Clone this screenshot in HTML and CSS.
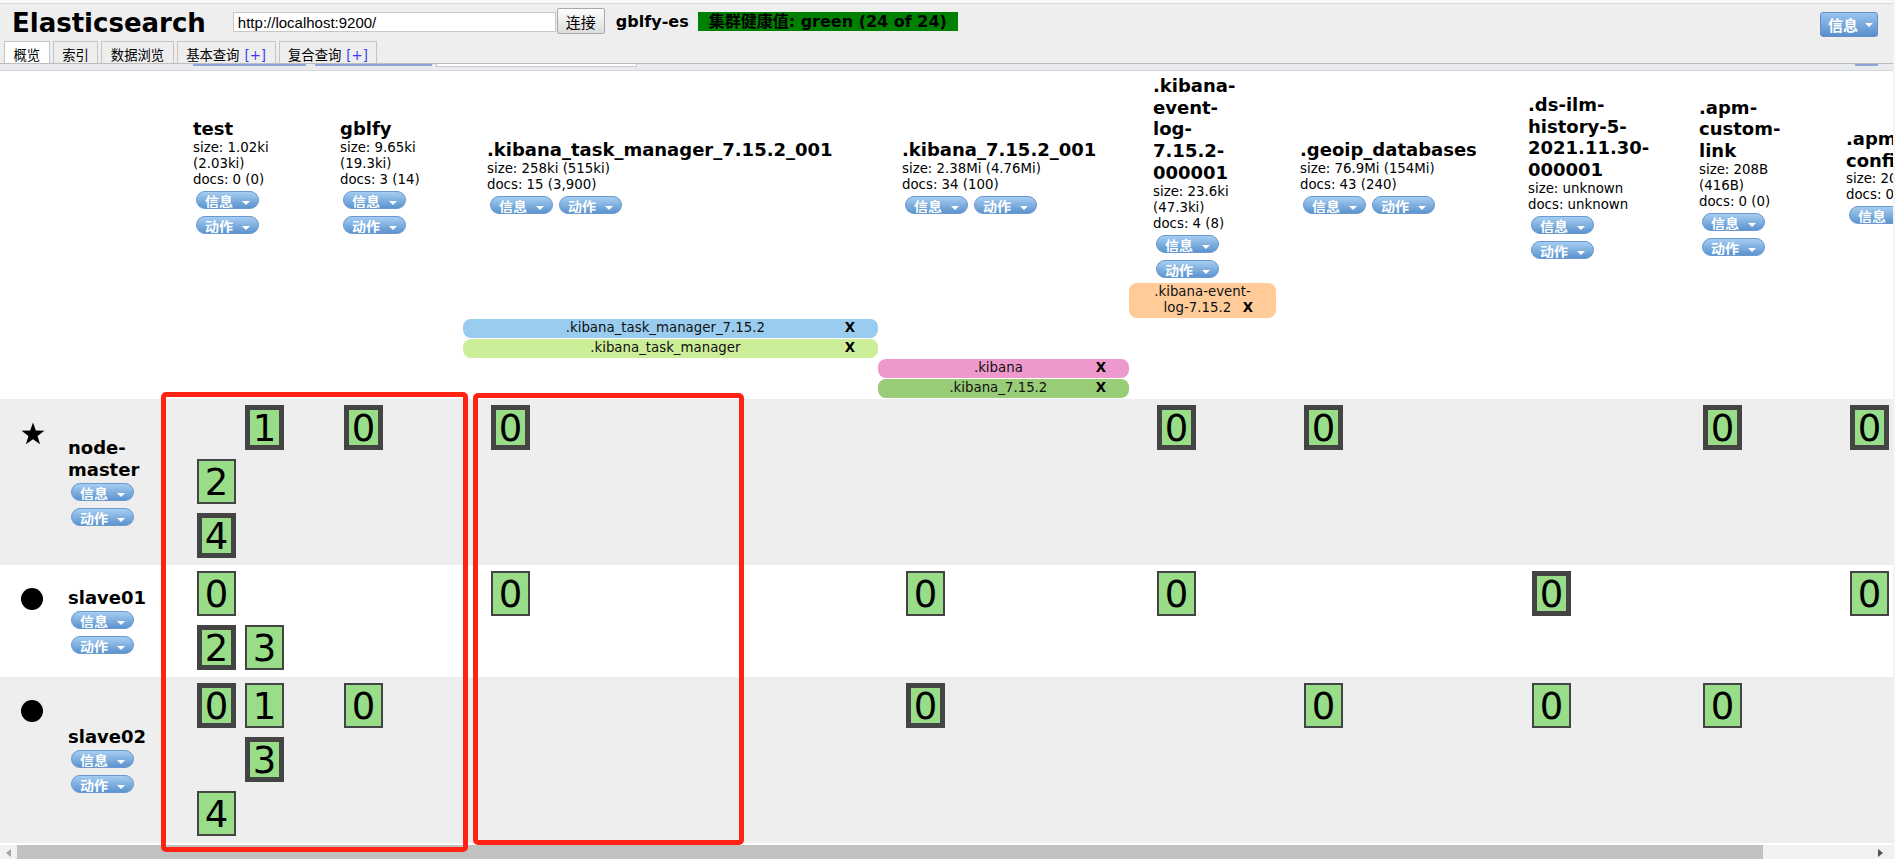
FILE: index.html
```html
<!DOCTYPE html>
<html lang="zh-CN">
<head>
<meta charset="utf-8">
<title>Elasticsearch Head</title>
<link rel="stylesheet" href="styles.css">
</head>
<body>
<div class="page">
  <div class="topline"></div>
  <header class="hdr">
    <h1 class="brand">Elasticsearch</h1>
    <input class="url" type="text" value="http://localhost:9200/">
    <button class="connect" type="button">连接</button>
    <span class="cluster">gblfy-es</span>
    <span class="health">集群健康值: green (24 of 24)</span>
    <span class="infobtn">信息<i class="tri"></i></span>
  </header>
  <nav class="tabs">
    <span class="tab active">概览</span>
    <span class="tab">索引</span>
    <span class="tab">数据浏览</span>
    <span class="tab">基本查询<span class="plus">[+]</span></span>
    <span class="tab">复合查询<span class="plus">[+]</span></span>
  </nav>
  <div class="strip">
    <span class="sb sb1"></span><span class="sb sb2"></span><span class="sbox"></span><span class="sb sb3"></span>
  </div>
  <main class="content">
    <table class="ov">
      <colgroup>
        <col class="w-icon"><col class="w-name"><col class="w147"><col class="w147"><col class="w415"><col class="w251"><col class="w147"><col class="w228"><col class="w171"><col class="w147"><col class="w184">
      </colgroup>
      <tr class="ihead">
        <th></th><th></th>
        <th class="ix"><div class="iname">test</div><div class="istat">size: 1.02ki (2.03ki)<br>docs: 0 (0)</div><div class="btns"><span class="pill">信息<i class="tri"></i></span><span class="pill">动作<i class="tri"></i></span></div></th>
        <th class="ix"><div class="iname">gblfy</div><div class="istat">size: 9.65ki (19.3ki)<br>docs: 3 (14)</div><div class="btns"><span class="pill">信息<i class="tri"></i></span><span class="pill">动作<i class="tri"></i></span></div></th>
        <th class="ix"><div class="iname">.kibana_task_manager_7.15.2_001</div><div class="istat">size: 258ki (515ki)<br>docs: 15 (3,900)</div><div class="btns"><span class="pill">信息<i class="tri"></i></span><span class="pill">动作<i class="tri"></i></span></div></th>
        <th class="ix"><div class="iname">.kibana_7.15.2_001</div><div class="istat">size: 2.38Mi (4.76Mi)<br>docs: 34 (100)</div><div class="btns"><span class="pill">信息<i class="tri"></i></span><span class="pill">动作<i class="tri"></i></span></div></th>
        <th class="ix"><div class="iname">.kibana-<wbr>event-<wbr>log-<wbr>7.15.2-<wbr>000001</div><div class="istat">size: 23.6ki (47.3ki)<br>docs: 4 (8)</div><div class="btns"><span class="pill">信息<i class="tri"></i></span><span class="pill">动作<i class="tri"></i></span></div></th>
        <th class="ix"><div class="iname">.geoip_databases</div><div class="istat">size: 76.9Mi (154Mi)<br>docs: 43 (240)</div><div class="btns"><span class="pill">信息<i class="tri"></i></span><span class="pill">动作<i class="tri"></i></span></div></th>
        <th class="ix"><div class="iname">.ds-<wbr>ilm-<wbr>history-<wbr>5-<wbr>2021.11.30-<wbr>000001</div><div class="istat">size: unknown<br>docs: unknown</div><div class="btns"><span class="pill">信息<i class="tri"></i></span><span class="pill">动作<i class="tri"></i></span></div></th>
        <th class="ix"><div class="iname">.apm-<wbr>custom-<wbr>link</div><div class="istat">size: 208B (416B)<br>docs: 0 (0)</div><div class="btns"><span class="pill">信息<i class="tri"></i></span><span class="pill">动作<i class="tri"></i></span></div></th>
        <th class="ix"><div class="iname">.apm-<wbr>agent-<wbr>configuration</div><div class="istat">size: 208B (416B)<br>docs: 0 (0)</div><div class="btns"><span class="pill">信息<i class="tri"></i></span><span class="pill">动作<i class="tri"></i></span></div></th>
      </tr>
      <tr class="arow">
        <td colspan="6"></td>
        <td class="al"><div class="alias c-or">.kibana-event-log-7.15.2<span class="x">X</span></div></td>
        <td colspan="4"></td>
      </tr>
      <tr class="arow">
        <td colspan="4"></td>
        <td class="al"><div class="alias c-bl">.kibana_task_manager_7.15.2<span class="x">X</span></div></td>
        <td colspan="6"></td>
      </tr>
      <tr class="arow">
        <td colspan="4"></td>
        <td class="al"><div class="alias c-lg">.kibana_task_manager<span class="x">X</span></div></td>
        <td colspan="6"></td>
      </tr>
      <tr class="arow">
        <td colspan="5"></td>
        <td class="al"><div class="alias c-pk">.kibana<span class="x">X</span></div></td>
        <td colspan="5"></td>
      </tr>
      <tr class="arow">
        <td colspan="5"></td>
        <td class="al"><div class="alias c-gr">.kibana_7.15.2<span class="x">X</span></div></td>
        <td colspan="5"></td>
      </tr>
      <tr class="nrow gray">
        <td class="nicon"><svg class="star" width="24" height="23" viewBox="0 0 24 23"><path d="M12 0.5L14.82 8.62L23.41 8.79L16.56 13.98L19.05 22.21L12 17.3L4.95 22.21L7.44 13.98L0.59 8.79L9.18 8.62Z"/></svg></td>
        <td class="nname"><div class="iname">node-master</div><div class="btns"><span class="pill">信息<i class="tri"></i></span><span class="pill">动作<i class="tri"></i></span></div></td>
        <td class="sh"><div class="shards"><span class="shard ph"></span><span class="shard pri">1</span><span class="shard rep">2</span><span class="shard ph"></span><span class="shard pri">4</span></div></td>
        <td class="sh"><div class="shards"><span class="shard pri">0</span></div></td>
        <td class="sh"><div class="shards"><span class="shard pri">0</span></div></td>
        <td class="sh"></td>
        <td class="sh"><div class="shards"><span class="shard pri">0</span></div></td>
        <td class="sh"><div class="shards"><span class="shard pri">0</span></div></td>
        <td class="sh"></td>
        <td class="sh"><div class="shards"><span class="shard pri">0</span></div></td>
        <td class="sh"><div class="shards"><span class="shard pri">0</span></div></td>
      </tr>
      <tr class="nrow">
        <td class="nicon"><span class="dot"></span></td>
        <td class="nname"><div class="iname">slave01</div><div class="btns"><span class="pill">信息<i class="tri"></i></span><span class="pill">动作<i class="tri"></i></span></div></td>
        <td class="sh"><div class="shards"><span class="shard rep">0</span><span class="shard ph"></span><span class="shard pri">2</span><span class="shard rep">3</span></div></td>
        <td class="sh"></td>
        <td class="sh"><div class="shards"><span class="shard rep">0</span></div></td>
        <td class="sh"><div class="shards"><span class="shard rep">0</span></div></td>
        <td class="sh"><div class="shards"><span class="shard rep">0</span></div></td>
        <td class="sh"></td>
        <td class="sh"><div class="shards"><span class="shard pri">0</span></div></td>
        <td class="sh"></td>
        <td class="sh"><div class="shards"><span class="shard rep">0</span></div></td>
      </tr>
      <tr class="nrow gray">
        <td class="nicon"><span class="dot"></span></td>
        <td class="nname"><div class="iname">slave02</div><div class="btns"><span class="pill">信息<i class="tri"></i></span><span class="pill">动作<i class="tri"></i></span></div></td>
        <td class="sh"><div class="shards"><span class="shard pri">0</span><span class="shard rep">1</span><span class="shard ph"></span><span class="shard pri">3</span><span class="shard rep">4</span></div></td>
        <td class="sh"><div class="shards"><span class="shard rep">0</span></div></td>
        <td class="sh"></td>
        <td class="sh"><div class="shards"><span class="shard pri">0</span></div></td>
        <td class="sh"></td>
        <td class="sh"><div class="shards"><span class="shard rep">0</span></div></td>
        <td class="sh"><div class="shards"><span class="shard rep">0</span></div></td>
        <td class="sh"><div class="shards"><span class="shard rep">0</span></div></td>
        <td class="sh"></td>
      </tr>
    </table>
  </main>
  <div class="hscroll"><span class="arr arr-l"></span><span class="thumb"></span><span class="arr arr-r"></span></div>
  <div class="mark mark1"></div>
  <div class="mark mark2"></div>
</div>
</body>
</html>
```
FILE: styles.css
```css
* { box-sizing: border-box; }
html, body { margin: 0; padding: 0; }
html { background: #f4f4f4; }
body {
  width: 1895px;
  height: 859px;
  overflow: hidden;
  font-family: "DejaVu Sans", "Noto Sans CJK SC", sans-serif;
  font-size: 13.33px;
  color: #000;
}
.page {
  position: relative;
  width: 1893px;
  height: 859px;
  overflow: hidden;
  background: #fff;
}

/* top header */
.topline { height: 4px; background: #f8f8f8; border-bottom: 1px solid #dadada; }
.hdr {
  display: flex;
  align-items: flex-start;
  height: 37px;
  padding-left: 12px;
  background: #eee;
}
.brand {
  margin: 4px 27px 0 0;
  font-size: 26px;
  line-height: 30px;
  font-weight: bold;
}
.url {
  margin: 8px 0 0 0;
  width: 323px;
  height: 20px;
  border: 1px solid #c8c8c8;
  padding: 0 0 0 4px;
  font: 15px "Liberation Sans", Arial, sans-serif;
  color: #000;
  background: #fff;
  outline: none;
}
.connect {
  margin: 4px 0 0 1px;
  width: 48px;
  height: 26px;
  padding: 0;
  border: 1px solid #a9a9a9;
  border-radius: 2px;
  background: linear-gradient(#fdfdfd, #dcdcdc);
  font: 15px "Noto Sans CJK SC", sans-serif;
  color: #000;
}
.cluster {
  margin: 8px 0 0 11px;
  font-size: 16px;
  line-height: 19px;
  font-weight: bold;
}
.health {
  margin: 8px 0 0 9px;
  height: 19px;
  line-height: 19px;
  padding: 0 11px;
  background: #008000;
  font-size: 16px;
  font-weight: bold;
  color: #000;
}
.infobtn {
  margin: 8px 15px 0 auto;
  display: flex;
  align-items: center;
  width: 58px;
  height: 25px;
  padding-left: 7px;
  border: 1px solid #5f8fcb;
  border-radius: 3px;
  background: linear-gradient(#98c4ef, #5a8fcb);
  color: #fff;
  font-size: 15px;
  font-weight: bold;
}
.infobtn .tri { margin-left: 7px; }
.tri {
  display: inline-block;
  width: 0;
  height: 0;
  border-left: 4px solid transparent;
  border-right: 4px solid transparent;
  border-top: 4px solid #fff;
  vertical-align: middle;
}

/* tabs */
.tabs {
  display: flex;
  gap: 3px;
  height: 22px;
  padding-left: 4px;
  background: #eee;
}
.tab {
  height: 22px;
  border: 1px solid #c5c5c5;
  border-bottom: none;
  padding: 5px 8.5px 0;
  font-family: "Noto Sans CJK SC", sans-serif;
  font-size: 13.33px;
  line-height: 16px;
  background: #eee;
  white-space: nowrap;
}
.tab.active { background: #fff; }
.plus {
  margin-left: 5px;
  font-family: "DejaVu Sans", sans-serif;
  color: #3c3cf0;
}

/* thin toolbar strip */
.strip {
  display: flex;
  align-items: flex-start;
  height: 8px;
  border-top: 1px solid #bdbdbd;
  border-bottom: 1px solid #d3d6da;
  background: #e9ebee;
}
.sb { height: 2px; background: #8aa5d6; }
.sb1 { margin-left: 193px; width: 113px; }
.sb2 { margin-left: 9px; width: 117px; }
.sbox {
  margin-left: 4px;
  width: 201px;
  height: 3px;
  background: #fff;
  border: 1px solid #c9c9c9;
  border-top: none;
}
.sb3 { margin-left: auto; margin-right: 15px; width: 23px; }

/* overview table */
.content {
  height: 774px;
  overflow: hidden;
  background: #fff;
}
.ov {
  table-layout: fixed;
  width: 2006px;
  border-collapse: collapse;
  border-spacing: 0;
}
.ov th, .ov td { padding: 0; }
.w-icon { width: 56px; }
.w-name { width: 113px; }
.w147 { width: 147px; }
.w415 { width: 415px; }
.w251 { width: 251px; }
.w228 { width: 228px; }
.w171 { width: 171px; }
.w184 { width: 184px; }

.ov th.ix {
  padding: 4px 24px 5px;
  vertical-align: middle;
  text-align: left;
  font-weight: normal;
}
.iname {
  font-size: 18px;
  line-height: 21.7px;
  font-weight: bold;
}
.istat {
  font-size: 13.33px;
  line-height: 16px;
}
.btns {
  display: flex;
  flex-wrap: wrap;
  gap: 7px 6px;
  margin: 3px 0 0 3px;
}
.pill {
  display: inline-block;
  width: 63px;
  height: 18px;
  overflow: hidden;
  white-space: nowrap;
  padding: 2px 0 0 8px;
  border: 1px solid #6b98cf;
  border-radius: 9px;
  background: linear-gradient(#a6cdf1, #5b94cf);
  color: #fff;
  font-size: 14px;
  line-height: 16px;
  font-weight: bold;
}
.pill .tri { margin-left: 9px; }

/* alias rows */
.ov td.al { vertical-align: top; }
.alias {
  margin-bottom: 1px;
  padding: 1.5px 23px;
  border-radius: 8px;
  text-align: center;
  font-size: 13.33px;
  line-height: 16px;
  color: #111;
}
.alias .x { float: right; font-weight: bold; color: #000; }
.c-or { background: #ffcc99; }
.c-bl { background: #99ccee; }
.c-lg { background: #cdee99; }
.c-pk { background: #ee99cc; }
.c-gr { background: #99cc77; }

/* node rows */
.nrow.gray { background: #eee; }
.ov td.nicon { vertical-align: top; padding: 23px 0 0 21px; }
.star { display: block; fill: #000; }
.dot { display: block; width: 22px; height: 22px; border-radius: 50%; background: #000; }
.ov td.nname { vertical-align: middle; padding-left: 12px; }
.ov td.sh { vertical-align: top; padding: 2px 24px; }
.shards { display: flex; flex-wrap: wrap; }
.shard {
  width: 39px;
  height: 45px;
  margin: 4px 5px 5px 4px;
  background: #99dd88;
  text-align: center;
  font-size: 37px;
  overflow: hidden;
}
.shard.pri { border: 5px solid #444; line-height: 38.5px; }
.shard.rep { border: 2px solid #444; line-height: 44.5px; }
.shard.ph { visibility: hidden; }

/* fake horizontal scrollbar */
.hscroll {
  display: flex;
  align-items: stretch;
  height: 15px;
  background: #f1f1f1;
}
.arr { display: flex; align-items: center; justify-content: center; }
.arr-l { width: 17px; }
.arr-l::before {
  content: "";
  border-top: 4px solid transparent;
  border-bottom: 4px solid transparent;
  border-right: 5px solid #a3a3a3;
}
.thumb { width: 1746px; background: #c1c1c1; }
.arr-r { margin-left: auto; width: 15px; margin-right: 5px; }
.arr-r::before {
  content: "";
  border-top: 4px solid transparent;
  border-bottom: 4px solid transparent;
  border-left: 5px solid #505050;
}

/* red annotation boxes drawn over the screenshot */
.mark {
  position: absolute;
  border: 5px solid #ff2314;
  border-radius: 5px;
  pointer-events: none;
}
.mark1 { left: 161px; top: 392px; width: 307px; height: 460px; }
.mark2 { left: 473px; top: 393px; width: 271px; height: 452px; }
```
